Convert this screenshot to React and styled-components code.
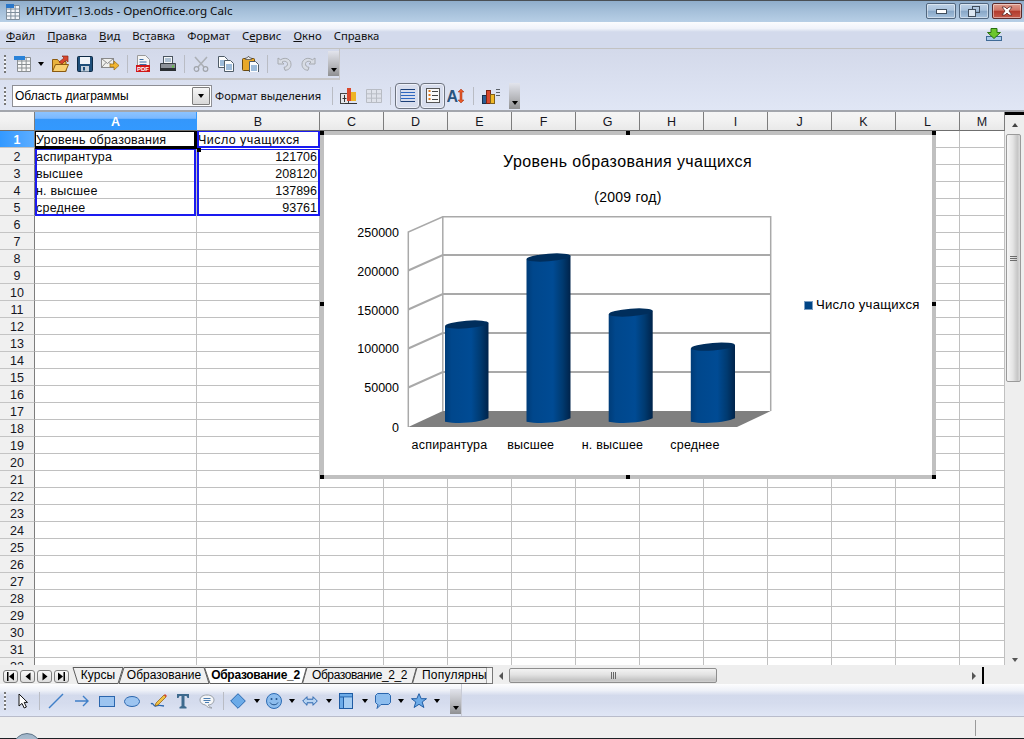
import React from "react";
import styled, { createGlobalStyle } from "styled-components";

const Global = createGlobalStyle`
  html, body { margin: 0; padding: 0; width: 1024px; height: 739px; overflow: hidden; background: #efefef; }
  * { box-sizing: border-box; }
  svg { display: block; flex: none; }
`;

const UI = `"Noto Sans", "Liberation Sans", sans-serif`;
const ARIAL = `"Liberation Sans", Arial, sans-serif`;

const Window = styled.div`
  position: relative; width: 1024px; height: 739px; overflow: hidden;
  display: flex; flex-direction: column; font-family: ${ARIAL}; color: #000;
`;

/* ---------- title bar ---------- */
const TitleBar = styled.header`
  flex: none; height: 22px; border-top: 1px solid #4a4f55;
  background: linear-gradient(180deg, #8fadcb 0%, #a6c0da 50%, #b7cfe6 100%);
  display: flex; align-items: center; padding: 0 2px 0 6px;
`;
const TitleText = styled.span`
  font: 11.6px ${UI}; margin: -2px 0 0 6px; flex: 1; color: #0c0c0c; white-space: nowrap;
`;
const WinButtons = styled.div`
  display: flex; gap: 3px; align-self: flex-start; margin-top: 2px;
`;
const WinButton = styled.div`
  width: 30px; height: 16px; border-radius: 2px;
  border: 1px solid ${p => (p.$close ? "#5a2a2a" : "#51677f")};
  box-shadow: inset 0 0 0 1px rgba(255,255,255,.45);
  background: ${p => p.$close
    ? "linear-gradient(180deg,#dd9c8c 0%,#cf7466 45%,#b23a2c 50%,#c4594a 100%)"
    : "linear-gradient(180deg,#bcd0e5 0%,#a9c2dc 45%,#87a6c6 50%,#a6c2dd 100%)"};
  display: flex; align-items: center; justify-content: center;
`;

/* ---------- menu bar ---------- */
const MenuBar = styled.nav`
  flex: none; height: 26px; padding: 5px 6px 0;
  background: linear-gradient(180deg, #fbfcfe 0%, #f0f3fa 25%, #d3daec 38%, #d3daec 100%);
  display: flex; gap: 12px; position: relative;
`;
const MenuItem = styled.span`
  font: 11.3px/18px ${UI}; white-space: nowrap; color: #111;
  u { text-decoration: underline; text-underline-offset: 1px; }
`;
const MenuEnd = styled.div`
  margin-left: auto; margin-right: 16px; margin-top: 1px;
`;

/* ---------- toolbars ---------- */
const ToolArea = styled.div`
  flex: none; height: 64px; border-top: 1px solid #c2c2c2; border-bottom: 2px solid #a3a6ad;
  background: linear-gradient(180deg, #d3d9ea 0%, #e0e6f5 100%);
  display: flex; flex-direction: column;
`;
const ToolRow = styled.div`
  height: ${p => p.$h}px; width: ${p => p.$w}px; display: flex; align-items: center;
  border-right: ${p => (p.$line ? "1px solid #c6c6c8" : "0")};
  border-bottom: ${p => (p.$line ? "2px solid #c6c6c8" : "0")};
  flex: none;
`;
const Slot = styled.div`
  width: ${p => p.$w}px; height: 24px; flex: none;
  display: flex; align-items: center; justify-content: center;
`;
const Pressed = styled(Slot)`
  height: 26px; border: 1.5px solid #6e7480; border-radius: 4px; background: #d7dded;
  box-shadow: inset 0 0 0 1px #eef1f9;
`;
const Grip = styled.div`
  width: 2px; height: 18px; margin: 0 5px 0 4px; flex: none;
  background: repeating-linear-gradient(180deg, #777 0 2px, #f4f6fb 2px 4px);
`;
const Sep = styled.div`
  width: ${p => p.$w}px; height: 18px; flex: none; position: relative;
  &::after { content: ""; position: absolute; left: 50%; top: 0; bottom: 0; width: 1px; background: #b9bcc4; }
`;
const Caret = styled.i`
  display: block; width: 0; height: 0; flex: none;
  border-left: 3.5px solid transparent; border-right: 3.5px solid transparent;
  border-top: 4px solid #000;
`;
const Overflow = styled.div`
  width: 11px; height: ${p => p.$h || 25}px; flex: none; margin-left: ${p => p.$ml || 0}px;
  background: linear-gradient(180deg, #e2e4ec 0%, #b5b6ba 60%, #8f9092 100%);
  display: flex; align-items: flex-end; justify-content: center; padding-bottom: 4px;
`;
const NameBox = styled.div`
  width: 200px; height: 22px; flex: none; margin-left: 1px; background: #fff; border: 1px solid #8e8f95;
  display: flex; align-items: center; padding: 0 1px 0 2px; position: relative;
`;
const NameText = styled.span`
  font: 12px ${ARIAL}; flex: 1; white-space: nowrap;
`;
const NameDrop = styled.div`
  width: 18px; height: 18px; border: 1px solid #7c7c7c; border-radius: 1px;
  background: linear-gradient(180deg, #f6f6f6, #d8d8d8);
  display: flex; align-items: center; justify-content: center;
`;
const ToolLabel = styled.span`
  font: 11.2px ${UI}; margin-left: 3px; width: 112px; white-space: nowrap; color: #111;
`;

/* ---------- sheet ---------- */
const Sheet = styled.main`
  flex: none; height: 553px; display: flex; background: #fff;
`;
const GridWrap = styled.div`
  position: relative; width: 1005px; height: 553px; overflow: hidden;
`;
const Grid = styled.div`
  display: grid;
  grid-template-columns: 35px 162px 123px repeat(10, 64px) 45px;
  grid-template-rows: 19px;
  grid-auto-rows: 17px;
`;
const ColHead = styled.div`
  border-right: 1px solid ${p => (p.$active ? "#3399ff" : "#7d7d7d")};
  border-bottom: 1px solid #6f6f6f;
  background: ${p => p.$active ? "linear-gradient(180deg,#8cc3ff 0%,#7bb9ff 35%,#3497fb 40%,#3399ff 100%)" : "linear-gradient(180deg,#f5f5f5 0%,#f1f1f1 50%,#e9e9e9 100%)"};
  color: ${p => (p.$active ? "#fff" : "#16161e")};
  font: ${p => (p.$active ? "bold " : "")}12.5px/18px ${ARIAL}; text-align: center; padding-top: 1px;
`;
const RowHead = styled.div`
  border-right: 1px solid #7d7d7d; border-bottom: 1px solid #c4c4c4;
  background: ${p => (p.$active ? "linear-gradient(90deg,#3399ff,#5cadff)" : "#f0f0f0")};
  color: ${p => (p.$active ? "#fff" : "#16161e")};
  font: ${p => (p.$active ? "bold " : "")}12.5px/17px ${ARIAL}; text-align: center; padding-top: 1px;
`;
const Cell = styled.div`
  border-right: 1px solid #c0c0c0; border-bottom: 1px solid #c0c0c0;
  font: 12.5px/17px ${ARIAL}; letter-spacing: ${p => p.$ls}px; padding: 1px 2px 0 1px; white-space: nowrap; overflow: hidden;
  text-align: ${p => (p.$num ? "right" : "left")};
  color: #0a0a0a;
`;
const RangeBox = styled.div`
  position: absolute; left: ${p => p.$x}px; top: ${p => p.$y}px; width: ${p => p.$w}px; height: ${p => p.$h}px;
  border: 2px solid #1a1af0; border-top-width: 1px; border-bottom-width: 2px; pointer-events: none;
`;
const CursorBox = styled.div`
  position: absolute; left: 35px; top: 19px; width: 162px; height: 18px;
  border: 1px solid #000; border-right-width: 3px; border-bottom-width: 3px;
  &::after { content: ""; position: absolute; right: -7px; bottom: -6px; width: 4px; height: 4px; background: #000; }
`;
const ChartFrame = styled.section`
  position: absolute; left: 320px; top: 19px; width: 616px; height: 348px;
  background: #fff; border: 4px solid #c0c0c0;
`;
const Handle = styled.i`
  position: absolute; width: 4px; height: 4px; background: #000;
  left: ${p => p.$x}px; top: ${p => p.$y}px;
`;

/* ---------- vertical scrollbar ---------- */
const VScroll = styled.aside`
  width: 19px; height: 553px; background: #eeeeee; border-top: 3px solid #000; position: relative;
`;
const VUp = styled.div`
  height: 19px; display: flex; align-items: center; justify-content: center;
`;
const VDown = styled(VUp)`
  position: absolute; left: 0; right: 0; bottom: -3px; height: 16px; top: auto;
`;
const UpCaret = styled(Caret)`
  border-top: 0; border-bottom: 4px solid #444;
`;
const DownCaret = styled(Caret)`
  border-top-color: #555;
`;
const VThumb = styled.div`
  width: 15px; height: 248px; margin-left: 1px; border: 1px solid #9a9a9a; border-radius: 2px;
  background: linear-gradient(90deg,#f6f6f6 0%,#e4e4e4 45%,#c6c6c6 80%,#dcdcdc 100%);
  display: flex; align-items: center; justify-content: center; flex-direction: column; gap: 1px;
  i { display: block; width: 7px; height: 1px; background: #6c6c6c; }
`;

/* ---------- tab bar ---------- */
const TabBar = styled.div`
  flex: none; height: 19px; background: #eeeeee; display: flex; align-items: flex-end; position: relative;
`;
const NavGroup = styled.div`
  width: 72px; height: 17px; display: flex; gap: 2px; padding: 1px 0 0 3px; align-self: flex-start; margin-top: 4px; flex: none;
`;
const NavBtn = styled.div`
  width: 15px; height: 13px; border: 1px solid #7e7e7e; border-radius: 3px;
  background: linear-gradient(180deg,#fafafa,#dcdcdc);
  display: flex; align-items: center; justify-content: center;
`;
const Tab = styled.div`
  position: relative; flex: none; width: ${p => p.$w}px; height: 17px; margin-left: ${p => p.$ml}px;
  z-index: ${p => (p.$active ? 2 : 1)}; overflow: hidden;
  font: ${p => (p.$active ? "bold " : "")}12px/16px ${ARIAL}; letter-spacing: ${p => p.$ls}px;
  text-align: ${p => (p.$cut ? "left" : "center")}; padding-left: ${p => (p.$cut ? 10 : 0)}px; white-space: nowrap;
  svg { position: absolute; inset: 0; }
  span { position: relative; }
`;
const TabEnd = styled.div`
  width: 6px; height: 17px; flex: none; background: #f4f4f4; border: 1px solid #777; border-width: 1px 1px 1px 0;
`;
const HScroll = styled.div`
  flex: none; width: 532px; height: 17px; position: relative; display: flex; align-items: center;
`;
const HArrow = styled.div`
  width: 16px; display: flex; justify-content: center; flex: none;
`;
const LeftCaret = styled.i`
  display: block; width: 0; height: 0; border-top: 4px solid transparent; border-bottom: 4px solid transparent;
  border-right: 4px solid #555;
`;
const RightCaret = styled.i`
  display: block; width: 0; height: 0; border-top: 4px solid transparent; border-bottom: 4px solid transparent;
  border-left: 4px solid #555;
`;
const HThumb = styled.div`
  width: 208px; height: 15px; border: 1px solid #8e8e8e; border-radius: 2px;
  background: linear-gradient(180deg,#f3f3f3 0%,#e2e2e2 45%,#c4c4c4 85%,#d0d0d0 100%);
  display: flex; align-items: center; justify-content: center; gap: 1px; flex: none;
  i { display: block; width: 1px; height: 7px; background: #666; }
`;
const HTrackGap = styled.div`flex: 1;`;
const BlackStop = styled.div`
  width: 2px; height: 17px; background: #000; margin-left: 0; margin-right: 41px; flex: none;
`;

/* ---------- drawing bar, status ---------- */
const DrawBar = styled.div`
  flex: none; height: 33px; border-bottom: 1px solid #b9bccb;
  background: linear-gradient(180deg,#fdfdfe 0%,#eef1f8 20%,#d3daec 36%,#d5dcee 60%,#e0e6f5 100%);
  display: flex; align-items: center;
`;
const DrawRow = styled.div`
  width: 462px; height: 32px; display: flex; align-items: center; border-right: 1px solid #c9ccd6; padding-top: 2px;
`;
const StatusBar = styled.footer`
  flex: none; height: 21px; background: #efefef; position: relative; display: flex; justify-content: flex-end; padding: 3px 48px 2px 0;
`;
const StatusDivider = styled.div`
  width: 1px; background: #9a9a9a;
`;
const TaskEdge = styled.div`
  flex: none; height: 1px; background: #1c2126;
`;
const StartOrb = styled.div`
  position: absolute; left: 13px; top: 733px; width: 28px; height: 28px; border-radius: 50%;
  background: linear-gradient(180deg,#9fb4c8,#d0dde8); border: 1px solid #5f7488;
`;

/* ---------- icons ---------- */
const GridLines = ({ x, y, w, h, cols, rows, c = "#8a8a8a" }) => {
  const out = [];
  for (let i = 0; i <= cols; i++) out.push(<path key={"c" + i} d={`M${x + (w * i) / cols} ${y}V${y + h}`} stroke={c} />);
  for (let i = 0; i <= rows; i++) out.push(<path key={"r" + i} d={`M${x} ${y + (h * i) / rows}H${x + w}`} stroke={c} />);
  return out;
};
const I = ({ w = 18, h = 18, children }) => <svg width={w} height={h} viewBox={`0 0 ${w} ${h}`}>{children}</svg>;

const SheetLogo = () => (
  <I w={14} h={16}>
    <rect x=".5" y="1.5" width="13" height="14" fill="#f4f6fa" />
    <GridLines x={.5} y={1.5} w={13} h={14} cols={3} rows={4} c="#7f8e9c" />
    <rect x="0" y="0" width="8" height="4" fill="#2b77c9" />
  </I>
);
const NewIcon = () => (
  <I>
    <rect x="3.5" y="2.5" width="13" height="14" fill="#f7f7f7" />
    <GridLines x={3.5} y={2.5} w={13} h={14} cols={3} rows={4} c="#8a8f92" />
    <rect x="0" y="1" width="11" height="4" fill="#2a82d8" />
  </I>
);
const FolderIcon = () => (
  <I>
    <path d="M1.5 16.5V4.5h5l1.5 2h7v10z" fill="#e8b23c" stroke="#8a5a10" />
    <path d="M1.5 16.5l3-7h13l-3 7z" fill="#f8d070" stroke="#8a5a10" />
    <path d="M8 7l5-4-2-2h6v6l-2-2-4 4z" fill="#d8452c" stroke="#8c2a18" strokeWidth=".7" />
  </I>
);
const SaveIcon = () => (
  <I w={16} h={16}>
    <rect x=".5" y=".5" width="15" height="15" rx="1" fill="#1d4e79" stroke="#0e2a45" />
    <rect x="3" y="1" width="10" height="7" fill="#eef3f8" />
    <rect x="4" y="10" width="8" height="5.5" fill="#c4d0dc" />
    <rect x="6" y="11" width="2" height="3.5" fill="#1d4e79" />
  </I>
);
const MailIcon = () => (
  <I w={18} h={14}>
    <rect x=".5" y="1.5" width="12" height="9" fill="#f0f0ee" stroke="#8a8a8a" />
    <path d="M.5 1.5l6 5 6-5M.5 10.5l4.5-5M12.5 10.5l-4.5-5" fill="none" stroke="#8a8a8a" />
    <path d="M9 7h4V4l5 4.5-5 4.5v-3H9z" fill="#f2b632" stroke="#9a6a10" strokeWidth=".7" />
  </I>
);
const PdfIcon = () => (
  <I w={14} h={17}>
    <path d="M1.5.5h8l4 4v8h-12z" fill="#f5f5f5" stroke="#9a9a9a" />
    <path d="M3.5 4.5h4M3.5 7h7M3.5 9.5h7" stroke="#3d6ea5" />
    <rect x="0" y="10" width="14" height="7" fill="#d01818" />
    <text x="7" y="15.8" textAnchor="middle" fontSize="6" fontWeight="700" fontFamily="Liberation Sans" fill="#fff">PDF</text>
  </I>
);
const PrintIcon = () => (
  <I w={18} h={16}>
    <rect x="4.5" y=".5" width="9" height="7" fill="#f4f6f8" stroke="#4a5560" />
    <path d="M6 3h6M6 5h6" stroke="#6a8cac" />
    <path d="M1.5 7.5h15v6h-15z" fill="#8c9198" stroke="#3a3f44" />
    <rect x="1" y="12" width="16" height="3" fill="#2b2f33" />
    <rect x="13" y="9.5" width="2" height="2" fill="#60c040" />
  </I>
);
const CutIcon = () => (
  <I w={16} h={16}>
    <path d="M2 1l9 10M14 1L5 11" stroke="#acb0b6" strokeWidth="1.6" fill="none" />
    <circle cx="3.5" cy="13" r="2.3" fill="none" stroke="#a0a4aa" strokeWidth="1.2" />
    <circle cx="12.5" cy="13" r="2.3" fill="none" stroke="#a0a4aa" strokeWidth="1.2" />
  </I>
);
const Page = ({ x, y, w = 9, h = 11, line = "#3f7bb8" }) => (
  <g>
    <path d={`M${x + .5} ${y + .5}h${w - 3}l3 3v${h - 3}h-${w}z`} fill="#fbfcfd" stroke="#4f5c68" />
    <path d={`M${x + 2} ${y + 5}h${w - 3}M${x + 2} ${y + 7}h${w - 3}M${x + 2} ${y + 9}h${w - 3}`} stroke={line} />
  </g>
);
const CopyIcon = () => (
  <I w={16} h={16}><Page x={0} y={0} /><Page x={6} y={4} w={9} h={11} /></I>
);
const PasteIcon = () => (
  <I w={17} h={16}>
    <rect x=".5" y="2.5" width="12" height="12" rx="1" fill="#e8a828" stroke="#6a4a10" />
    <path d="M3.5 3.5V2h1.5l1-1.5h1L8 2h1.5v1.5z" fill="#e8e8e8" stroke="#555" strokeWidth=".8" />
    <Page x={7} y={5} w={9} h={11} />
  </I>
);
const UndoIcon = ({ flip }) => (
  <I w={16} h={16}>
    <g transform={flip ? "translate(16 0) scale(-1 1)" : undefined}>
      <path d="M2 2v6h6L6 6c1.5-1.2 5-1 5.5 1.5.4 2-1.2 3.5-3.5 3.8l1 3c4-.2 6-2.8 6-6C15 3 9 .6 4.6 3.8z" fill="#d8dce4" stroke="#a6aab0" />
    </g>
  </I>
);
const ChartTypeIcon = () => (
  <I w={18} h={18}>
    <rect x="0.5" y="6.5" width="8" height="10" fill="#e4e6ea" stroke="#444" />
    <path d="M4.5 8v7M2.5 11.5h4" stroke="#333" />
    <rect x="7" y="1" width="4" height="13" fill="#d9482c" />
    <rect x="11" y="5" width="5" height="9" fill="#eeb424" />
    <path d="M5 16.5h12" stroke="#333" />
  </I>
);
const DisabledGrid = () => (
  <I w={16} h={14}>
    <rect x=".5" y=".5" width="15" height="13" fill="#dfe2ea" />
    <GridLines x={.5} y={.5} w={15} h={13} cols={3} rows={3} c="#b8bcc4" />
  </I>
);
const LinesIcon = () => (
  <I w={16} h={15}>
    {[1, 4, 7, 10, 13].map(y => <path key={y} d={`M1 ${y + .5}h14`} stroke={y === 1 || y === 13 ? "#1b3f78" : "#2d66c0"} />)}
    <path d="M.5 1v13" stroke="#7a8fb0" />
  </I>
);
const ListIcon = () => (
  <I w={14} h={15}>
    <rect x=".5" y=".5" width="13" height="14" fill="#f9f9f9" stroke="#555" />
    {[3, 7, 11].map(y => (
      <g key={y}><rect x="2.5" y={y - 1} width="2" height="2" fill="#e07820" /><path d={`M6 ${y + .5}h6`} stroke="#444" /></g>
    ))}
  </I>
);
const TextFitIcon = () => (
  <I w={18} h={16}>
    <text x="-.5" y="13.5" fontSize="16" fontWeight="700" fontFamily="Liberation Sans" fill="#29557f">A</text>
    <path d="M14 1l3 3h-2v8h2l-3 3-3-3h2V4h-2z" fill="#e85828" stroke="#a03010" strokeWidth=".5" />
  </I>
);
const BarsIcon = () => (
  <I w={18} h={16}>
    <rect x=".5" y="7.5" width="4" height="8" fill="#2d5f94" stroke="#16314f" />
    <rect x="4.5" y="2.5" width="4" height="13" fill="#d8482c" stroke="#7c2414" />
    <rect x="8.5" y="6.5" width="4" height="9" fill="#f0b828" stroke="#80601a" />
    <path d="M14 1.5h4M14 4.5h4M14 7.5h4" stroke="#5a6068" />
  </I>
);
const DownloadIcon = () => (
  <I w={16} h={13}>
    <rect x=".5" y="8.5" width="15" height="4" fill="#a9c8e8" stroke="#3f6a96" />
    <path d="M5 .5h6v4h3.5L8 10.5 1.5 4.5H5z" fill="#6cc62e" stroke="#2a7010" />
  </I>
);
const MinGlyph = () => <I w={11} h={7}><rect x=".5" y="1.5" width="10" height="4" fill="#fff" stroke="#3f4d5c" /></I>;
const RestoreGlyph = () => (
  <I w={12} h={11}>
    <rect x="4.5" y=".5" width="7" height="6" fill="none" stroke="#3f4d5c" />
    <rect x=".5" y="3.5" width="7" height="7" fill="#dbe6f1" stroke="#3f4d5c" />
  </I>
);
const CloseGlyph = () => (
  <I w={12} h={10}>
    <path d="M1 1h3l2 2 2-2h3L8 5l3 4H8L6 7 4 9H1l3-4z" fill="#fff" stroke="#5a2a26" strokeWidth=".8" />
  </I>
);
const PointerIcon = () => (
  <I w={10} h={16}><path d="M1 1v12l3-2.6L6.2 15l2.2-1L6.2 9.4H9.5z" fill="#fff" stroke="#111" /></I>
);
const LineIcon = () => <I w={16} h={16}><path d="M1 15L15 1" stroke="#3f7fc8" strokeWidth="1.4" /></I>;
const ArrowIcon = () => <I w={16} h={12}><path d="M1 6h13M9 1l5 5-5 5" stroke="#3f7fc8" strokeWidth="1.4" fill="none" /></I>;
const RectIcon = () => <I w={16} h={11}><rect x=".5" y=".5" width="15" height="10" fill="#9cc4f0" stroke="#2a66ae" /></I>;
const EllipseIcon = () => <I w={16} h={11}><ellipse cx="8" cy="5.5" rx="7.5" ry="5" fill="#9cc4f0" stroke="#2a66ae" /></I>;
const FreeIcon = () => (
  <I w={17} h={16}>
    <path d="M1 11c2-2 3 3 5 2s3-1 8 0" fill="none" stroke="#2a66ae" strokeWidth="1.3" />
    <path d="M6 10l8-8 2 2-8 8-3 1z" fill="#f0c040" stroke="#8a5a10" strokeWidth=".7" />
    <path d="M14 2l1-1 2 2-1 1z" fill="#d84030" />
  </I>
);
const TIcon = () => (
  <I w={14} h={16}><path d="M1 1h12v4h-1.5L10.5 3H8.5v10l2 1v1.5h-7V14l2-1V3h-2l-1 2H1z" fill="#3d6a8e" /></I>
);
const CalloutIcon = () => (
  <I w={16} h={15}>
    <path d="M8 1c4 0 7 2 7 5s-3 5-6 5c1 1 2 2 4 3-3 0-5-1-6.5-3C3 10.5 1 8.5 1 6c0-3 3-5 7-5z" fill="#f4f6f8" stroke="#9aa0a8" />
    <path d="M4.5 4.5h7M4.5 6.5h7M6 8.5h4" stroke="#4a7cb0" />
  </I>
);
const DiamondIcon = () => <I w={16} h={16}><path d="M8 .7L15.3 8 8 15.3 .7 8z" fill="#6cabe8" stroke="#2566ae" /></I>;
const SmileIcon = () => (
  <I w={16} h={16}>
    <circle cx="8" cy="8" r="7.5" fill="#8dbdee" stroke="#2d6cb4" />
    <circle cx="5.5" cy="6" r="1" fill="#24548c" /><circle cx="10.5" cy="6" r="1" fill="#24548c" />
    <path d="M4 9.5c1.5 3 6.5 3 8 0" fill="none" stroke="#24548c" />
  </I>
);
const DoubleArrowIcon = () => (
  <I w={16} h={10}><path d="M.7 5L5 .7v2.5h6V.7L15.3 5 11 9.3V6.8H5v2.5z" fill="#b8d4f2" stroke="#2a66ae" /></I>
);
const TableIcon = () => (
  <I w={14} h={16}>
    <rect x=".5" y=".5" width="13" height="15" fill="#6cabe8" stroke="#1f5ca4" />
    <path d="M.5 4h13M4.5 4v11.5" stroke="#1f5ca4" />
    <rect x="5" y="4.5" width="8" height="10.5" fill="#a6cdf2" />
  </I>
);
const BubbleIcon = () => (
  <I w={16} h={16}>
    <path d="M2.5.5h11l2 2v7l-2 2H6l-4 4 1-4h-.5l-2-2v-7z" fill="#8dbdee" stroke="#2a66ae" />
  </I>
);
const StarIcon = () => (
  <I w={16} h={16}>
    <path d="M8 .7l2.2 5h5.3l-4.3 3.3 1.7 5.5L8 11.3 3.1 14.5l1.7-5.5L.5 5.7h5.3z" fill="#6cabe8" stroke="#1f5ca4" />
  </I>
);

const FirstGlyph = () => <I w={9} h={9}><path d="M1 0h1.5v9H1zM8 .5v8L3 4.5z" fill="#000" /></I>;
const PrevGlyph = () => <I w={6} h={9}><path d="M5.5 .5v8L.5 4.5z" fill="#000" /></I>;
const NextGlyph = () => <I w={6} h={9}><path d="M.5 .5v8L5.5 4.5z" fill="#000" /></I>;
const LastGlyph = () => <I w={9} h={9}><path d="M6.5 0H8v9H6.5zM1 .5v8L6 4.5z" fill="#000" /></I>;

const TabShape = ({ w, tl, bl, tr, br, active }) => (
  <svg width={w} height={17} viewBox={`0 0 ${w} 17`}>
    <path
      d={`M${tl} .5L${bl} 16.5H${br}L${tr} .5z`}
      fill={active ? "#fff" : "#f0f0f0"} stroke="#5c5c5c"
    />
  </svg>
);

/* ---------- chart ---------- */
const bars = [
  { x1: 445, x2: 488.5, top: 324.5, bottom: 420 },
  { x1: 526.5, x2: 570.5, top: 257.5, bottom: 420 },
  { x1: 608.7, x2: 652.7, top: 312.5, bottom: 420 },
  { x1: 690.8, x2: 735, top: 346.7, bottom: 420 },
];
const yLabels = [["250000", 232], ["200000", 271], ["150000", 310], ["100000", 348], ["50000", 387], ["0", 427]];
const xLabels = [["аспирантура", 449.5], ["высшее", 530.7], ["н. высшее", 612.5], ["среднее", 695]];
const backY = [255, 294, 333, 372];

const ChartText = styled.text`
  font-family: ${ARIAL}; font-size: ${p => p.$s}px; fill: #000; letter-spacing: ${p => p.$ls || 0}px;
`;

const Chart = () => (
  <svg width="608" height="340" viewBox="324 135 608 340">
    <defs>
      <linearGradient id="barFill" x1="0" x2="1" y1="0" y2="0">
        <stop offset="0" stopColor="#003c78" />
        <stop offset=".15" stopColor="#00478c" />
        <stop offset=".6" stopColor="#004b94" />
        <stop offset=".82" stopColor="#003a70" />
        <stop offset="1" stopColor="#00234a" />
      </linearGradient>
    </defs>
    <ChartText $s={16} $ls={.4} x="627.5" y="167" textAnchor="middle">Уровень образования учащихся</ChartText>
    <ChartText $s={14} $ls={.25} x="628" y="202" textAnchor="middle">(2009 год)</ChartText>
    <g stroke="#a9a9a9" fill="none" strokeWidth="1.5">
      <path d="M408.3 427V232L442.8 216.7H770.7V411" />
      <path d="M442.8 216.7V411" />
      {backY.map(y => <path key={y} d={`M408.3 ${y + 15.5}L442.8 ${y}H770.7`} strokeWidth="2" />)}
    </g>
    <path d="M408.3 427L442.8 411H770.7L737 427z" fill="#7f7f7f" />
    {bars.map(b => {
      const cx = (b.x1 + b.x2) / 2;
      const rx = (b.x2 - b.x1) / 2;
      return (
        <g key={b.x1}>
          <path
            d={`M${b.x1} ${b.top + 1.7}V${b.bottom + 1.7}C${b.x1 + 14} ${b.bottom + 4.5} ${b.x2 - 10} ${b.bottom + 2.5} ${b.x2} ${b.bottom - 1.7}V${b.top - 1.7}z`}
            fill="url(#barFill)"
          />
          <ellipse cx={cx} cy={b.top} rx={rx} ry="3.8" fill="#002e5c" transform={`rotate(-4.3 ${cx} ${b.top})`} />
        </g>
      );
    })}
    {yLabels.map(([t, y]) => (
      <ChartText key={t} $s={12.5} x="399" y={y + 4.5} textAnchor="end">{t}</ChartText>
    ))}
    {xLabels.map(([t, x]) => (
      <ChartText key={t} $s={12.5} $ls={.2} x={x} y="449" textAnchor="middle">{t}</ChartText>
    ))}
    <rect x="804.5" y="301.5" width="8" height="8" fill="#004586" stroke="#7b9fc4" />
    <ChartText $s={13.2} $ls={.2} x="816" y="309">Число учащихся</ChartText>
  </svg>
);

/* ---------- data ---------- */
const colNames = ["A", "B", "C", "D", "E", "F", "G", "H", "I", "J", "K", "L", "M"];
const data = {
  1: ["Уровень образования", "Число учащихся"],
  2: ["аспирантура", "121706"],
  3: ["высшее", "208120"],
  4: ["н. высшее", "137896"],
  5: ["среднее", "93761"],
};
const rows = Array.from({ length: 32 }, (_, i) => i + 1);
const menu = [
  ["", "Ф", "айл"], ["", "П", "равка"], ["", "В", "ид"], ["Вс", "т", "авка"],
  ["Фо", "р", "мат"], ["С", "е", "рвис"], ["", "О", "кно"], ["Спр", "а", "вка"],
];
const handles = [[-4, -4], [302, -4], [608, -4], [-4, 167], [608, 167], [-4, 340], [302, 340], [608, 340]];
const tabs = [
  { t: "Курсы", w: 52, ml: 0, tl: 1, bl: 6, tr: 51, br: 46, ls: .1 },
  { t: "Образование", w: 92, ml: -6, tl: 6, bl: 1, tr: 86, br: 91, ls: 0 },
  { t: "Образование_2", w: 103, ml: -6, tl: .5, bl: 6, tr: 102.5, br: 98, active: true, ls: -.3 },
  { t: "Образование_2_2", w: 115, ml: -5, tl: 5, bl: .5, tr: 114.5, br: 110, ls: -.4 },
  { t: "Популярны", w: 75, ml: -5, tl: 5, bl: .5, tr: 75, br: 75, cut: true, ls: .22 },
];
const draw = [
  [24, <PointerIcon />], [8], [26, <LineIcon />], [26, <ArrowIcon />], [24, <RectIcon />], [26, <EllipseIcon />],
  [26, <FreeIcon />], [24, <TIcon />], [24, <CalloutIcon />], [8], [22, <DiamondIcon />], [16, <Caret />],
  [18, <SmileIcon />], [18, <Caret />], [18, <DoubleArrowIcon />], [20, <Caret />], [14, <TableIcon />],
  [24, <Caret />], [12, <BubbleIcon />], [24, <Caret />], [12, <StarIcon />], [24, <Caret />],
];
const cellSpacing = (r, i) => (r > 1 && i === 1 ? 0 : r === 1 && i === 1 ? .45 : .22);

export default function App() {
  return (
    <Window>
      <Global />
      <TitleBar>
        <SheetLogo />
        <TitleText>ИНТУИТ_13.ods - OpenOffice.org Calc</TitleText>
        <WinButtons>
          <WinButton><MinGlyph /></WinButton>
          <WinButton><RestoreGlyph /></WinButton>
          <WinButton $close><CloseGlyph /></WinButton>
        </WinButtons>
      </TitleBar>

      <MenuBar>
        {menu.map(([a, u, b]) => (
          <MenuItem key={a + u + b}>{a}<u>{u}</u>{b}</MenuItem>
        ))}
        <MenuEnd><DownloadIcon /></MenuEnd>
      </MenuBar>

      <ToolArea>
        <ToolRow $h={31} $w={340} $line>
          <Grip />
          <Slot $w={24}><NewIcon /></Slot>
          <Slot $w={12}><Caret /></Slot>
          <Slot $w={26}><FolderIcon /></Slot>
          <Slot $w={24}><SaveIcon /></Slot>
          <Slot $w={26}><MailIcon /></Slot>
          <Sep $w={8} />
          <Slot $w={24}><PdfIcon /></Slot>
          <Slot $w={26}><PrintIcon /></Slot>
          <Sep $w={6} />
          <Slot $w={28}><CutIcon /></Slot>
          <Slot $w={22}><CopyIcon /></Slot>
          <Slot $w={26}><PasteIcon /></Slot>
          <Sep $w={8} />
          <Slot $w={26}><UndoIcon /></Slot>
          <Slot $w={24}><UndoIcon flip /></Slot>
          <Overflow $ml={7}><Caret /></Overflow>
        </ToolRow>
        <ToolRow $h={31} $w={520}>
          <Grip />
          <NameBox>
            <NameText>Область диаграммы</NameText>
            <NameDrop><Caret /></NameDrop>
          </NameBox>
          <ToolLabel>Формат выделения</ToolLabel>
          <Sep $w={10} />
          <Slot $w={24}><ChartTypeIcon /></Slot>
          <Slot $w={26}><DisabledGrid /></Slot>
          <Sep $w={6} />
          <Slot $w={2} />
          <Pressed $w={25}><LinesIcon /></Pressed>
          <Pressed $w={25}><ListIcon /></Pressed>
          <Slot $w={22}><TextFitIcon /></Slot>
          <Sep $w={12} />
          <Slot $w={24}><BarsIcon /></Slot>
          <Overflow $ml={6} $h={26}><Caret /></Overflow>
        </ToolRow>
      </ToolArea>

      <Sheet>
        <GridWrap>
          <Grid>
            <ColHead />
            {colNames.map(c => <ColHead key={c} $active={c === "A"}>{c}</ColHead>)}
            {rows.map(r => (
              <React.Fragment key={r}>
                <RowHead $active={r === 1}>{r}</RowHead>
                {colNames.map((c, i) => (
                  <Cell key={c} $num={r > 1 && i === 1} $ls={cellSpacing(r, i)}>{data[r] && data[r][i]}</Cell>
                ))}
              </React.Fragment>
            ))}
          </Grid>
          <RangeBox $x={35} $y={37} $w={161} $h={67} />
          <RangeBox $x={197} $y={19} $w={123} $h={17} />
          <RangeBox $x={197} $y={37} $w={123} $h={67} />
          <CursorBox />
          <ChartFrame>
            <Chart />
            {handles.map(([x, y]) => <Handle key={x + "-" + y} $x={x} $y={y} />)}
          </ChartFrame>
        </GridWrap>
        <VScroll>
          <VUp><UpCaret /></VUp>
          <VThumb><i /><i /><i /></VThumb>
          <VDown><DownCaret /></VDown>
        </VScroll>
      </Sheet>

      <TabBar>
        <NavGroup>
          <NavBtn><FirstGlyph /></NavBtn>
          <NavBtn><PrevGlyph /></NavBtn>
          <NavBtn><NextGlyph /></NavBtn>
          <NavBtn><LastGlyph /></NavBtn>
        </NavGroup>
        {tabs.map(t => (
          <Tab key={t.t} $w={t.w} $ml={t.ml} $active={t.active} $cut={t.cut} $ls={t.ls}>
            <TabShape {...t} />
            <span>{t.t}</span>
          </Tab>
        ))}
        <TabEnd />
        <HScroll>
          <HArrow><LeftCaret /></HArrow>
          <HThumb><i /><i /><i /></HThumb>
          <HTrackGap />
          <HArrow><RightCaret /></HArrow>
          <BlackStop />
        </HScroll>
      </TabBar>

      <DrawBar>
        <DrawRow>
          <Grip />
          {draw.map(([w, icon], i) =>
            icon ? <Slot key={i} $w={w}>{icon}</Slot> : <Sep key={i} $w={w} />
          )}
          <Overflow $h={25} $ml={1}><Caret /></Overflow>
        </DrawRow>
      </DrawBar>

      <StatusBar><StatusDivider /></StatusBar>
      <TaskEdge />
      <StartOrb />
    </Window>
  );
}
